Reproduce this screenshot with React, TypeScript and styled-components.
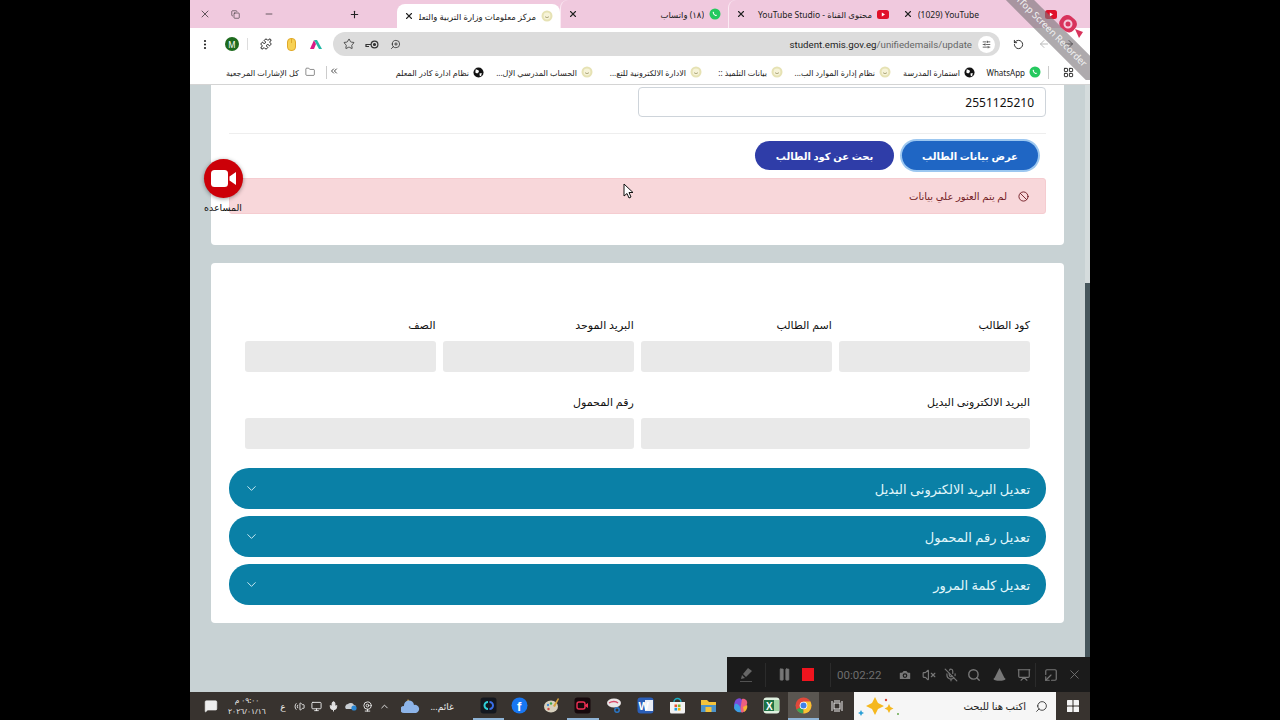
import React from "react";
import styled, { createGlobalStyle } from "styled-components";
import {
  ArrowLeft,
  ArrowRight,
  Ban,
  Camera,
  ChevronDown,
  ChevronUp,
  Copy,
  EllipsisVertical,
  Folder,
  LayoutGrid,
  Minus,
  MicOff,
  Pause,
  Plus,
  Puzzle,
  RotateCw,
  Search,
  SlidersHorizontal,
  Star,
  VolumeX,
  X,
  ChevronsLeft,
  ZoomIn,
  Volume2,
  Monitor,
  Mic,
  Presentation,
  SquareArrowOutDownLeft,
  MessageSquare,
  Webcam,
} from "lucide-react";

const GlobalStyle = createGlobalStyle`
  html, body { margin: 0; padding: 0; background: #000; overflow: hidden; }
  * { box-sizing: border-box; }
  body { font-family: "Noto Sans", "DejaVu Sans", sans-serif; }
`;

const Stage = styled.div`
  width: 1280px;
  height: 720px;
  background: #000;
  display: flex;
  justify-content: center;
`;

const Screen = styled.div`
  position: relative;
  width: 900px;
  height: 720px;
  display: flex;
  flex-direction: column;
  overflow: hidden;
`;

/* browser chrome */
const TabStrip = styled.div`
  height: 28px;
  background: #f0c9de;
  display: flex;
  align-items: center;
  direction: rtl;
  padding-right: 26px;
  color: #222;
  flex: none;
`;

const Tab = styled.div<{ $active?: boolean; $w: number; $sep?: boolean }>`
  position: relative;
  width: ${(p) => p.$w}px;
  height: ${(p) => (p.$active ? 24 : 28)}px;
  margin-top: ${(p) => (p.$active ? 4 : 0)}px;
  flex: none;
  display: flex;
  align-items: center;
  gap: 5px;
  padding: 0 7px 0 7px;
  background: ${(p) => (p.$active ? "#fff" : "transparent")};
  border-radius: 8px 8px 0 0;
  border-left: ${(p) => (p.$sep ? "1px solid #fbeaf3" : "none")};
`;

const TabTitle = styled.span<{ $ltr?: boolean }>`
  flex: 1;
  font-size: 8.5px;
  white-space: nowrap;
  overflow: hidden;
  text-align: ${(p) => (p.$ltr ? "left" : "right")};
  direction: ${(p) => (p.$ltr ? "ltr" : "rtl")};
`;

const WindowControls = styled.div`
  display: flex;
  align-items: center;
  direction: ltr;
  flex: 1;
  padding-left: 9px;
  gap: 0;
`;

const WinButton = styled.span<{ $w: number }>`
  width: ${(p) => p.$w}px;
  display: flex;
  justify-content: flex-start;
`;

const NewTab = styled.span`
  margin-left: 65px;
  display: flex;
`;

const Toolbar = styled.div`
  height: 32px;
  background: #fff;
  display: flex;
  align-items: center;
  padding: 0 9px 0 9px;
  color: #222;
  flex: none;
`;

const ToolIcon = styled.span<{ $w?: number; $faded?: boolean }>`
  width: ${(p) => p.$w ?? 26}px;
  display: flex;
  justify-content: center;
  align-items: center;
  flex: none;
  opacity: ${(p) => (p.$faded ? 0.3 : 1)};
`;

const Avatar = styled.span`
  width: 14px;
  height: 14px;
  border-radius: 50%;
  background: #1e6b1e;
  color: #fff;
  font-size: 8px;
  display: flex;
  justify-content: center;
  align-items: center;
`;

const ToolSep = styled.span`
  width: 1px;
  height: 12px;
  background: #ddd;
  margin: 0 6px 0 6px;
  flex: none;
`;

const Omnibox = styled.div`
  width: 667px;
  height: 24px;
  margin: 0 6px 0 5px;
  background: #dcdcdc;
  border-radius: 12px;
  display: flex;
  align-items: center;
  padding: 0 5px 0 5px;
  flex: none;
`;

const UrlText = styled.span`
  flex: 1;
  text-align: right;
  font-size: 9.7px;
  color: #1c1c1c;
  padding-right: 6px;
  font-family: "Roboto", sans-serif;
  span {
    color: #666;
  }
`;

const TuneButton = styled.span`
  width: 17px;
  height: 17px;
  border-radius: 50%;
  background: #fff;
  display: flex;
  justify-content: center;
  align-items: center;
`;

const BookmarkBar = styled.div`
  height: 25px;
  background: #fff;
  border-bottom: 1px solid #d4d4d4;
  display: flex;
  align-items: center;
  direction: rtl;
  padding: 0 0 0 10px;
  flex: none;
  color: #222;
`;

const Bookmark = styled.span<{ $w: number }>`
  width: ${(p) => p.$w}px;
  flex: none;
  display: flex;
  align-items: center;
  gap: 4px;
  font-size: 8px;
  white-space: nowrap;
  overflow: hidden;
`;

const BarSep = styled.span<{ $m?: number }>`
  width: 1px;
  height: 13px;
  background: #ccc;
  margin: 0 ${(p) => p.$m ?? 8}px;
  flex: none;
`;

/* page */
const Page = styled.div`
  flex: 1;
  min-height: 0;
  background: #c8d2d4;
  display: flex;
  overflow: hidden;
`;

const PageColumn = styled.div`
  flex: 1;
  padding: 0 21px;
  display: flex;
  flex-direction: column;
  gap: 18px;
`;

const Scrollbar = styled.div`
  width: 5px;
  background: #d5dcdd;
  padding-top: 198px;
  flex: none;
  div {
    height: 100%;
    background: #46565c;
  }
`;

const Card = styled.section<{ $top: number; $bottom: number }>`
  background: #fff;
  border-radius: 4px;
  padding: ${(p) => p.$top}px 18px ${(p) => p.$bottom}px;
  direction: rtl;
`;

const CodeInput = styled.div`
  width: 408px;
  height: 30px;
  border: 1px solid #ced4da;
  border-radius: 4px;
  font-size: 12px;
  color: #111;
  display: flex;
  align-items: center;
  padding: 0 11px;
`;

const Divider = styled.div`
  height: 1px;
  background: #eeeeee;
  margin: 16px 0 7px;
`;

const ButtonRow = styled.div`
  display: flex;
  gap: 8px;
  padding-right: 8px;
`;

const ActionButton = styled.div<{ $bg: string; $w: number; $focus?: boolean }>`
  width: ${(p) => p.$w}px;
  height: 29px;
  border-radius: 15px;
  background: ${(p) => p.$bg};
  box-shadow: ${(p) => (p.$focus ? "0 0 0 2px #9cc7f0" : "none")};
  color: #fff;
  font-size: 10px;
  font-weight: 700;
  display: flex;
  justify-content: center;
  align-items: center;
`;

const Alert = styled.div`
  height: 36px;
  margin-top: 8px;
  background: #f8d7da;
  border: 1px solid #f5ccd0;
  border-radius: 3px;
  color: #721c24;
  font-size: 10px;
  display: flex;
  align-items: center;
  gap: 11px;
  padding-right: 16px;
`;

const FieldGrid = styled.div`
  display: grid;
  grid-template-columns: repeat(4, 1fr);
  column-gap: 7.6px;
  row-gap: 23px;
  padding: 0 16px;
`;

const Field = styled.div<{ $span?: number }>`
  grid-column: span ${(p) => p.$span ?? 1};
`;

const FieldLabel = styled.div`
  height: 14px;
  line-height: 14px;
  font-size: 11px;
  color: #111;
  margin-bottom: 9px;
  white-space: nowrap;
`;

const ReadonlyBox = styled.div`
  height: 31px;
  background: #e9e9e9;
  border-radius: 3px;
`;

const AccordionList = styled.div`
  display: flex;
  flex-direction: column;
  gap: 7px;
  margin-top: 19px;
`;

const AccordionBar = styled.div`
  height: 41px;
  border-radius: 20px;
  background: #0a80a6;
  color: #e2f7fb;
  font-size: 13px;
  display: flex;
  align-items: center;
  justify-content: space-between;
  padding: 0 16px 0 15px;
`;

/* things lying over the page */
const HelpWidget = styled.div`
  position: absolute;
  left: 8px;
  top: 159px;
  width: 50px;
  display: flex;
  flex-direction: column;
  align-items: center;
`;

const HelpCircle = styled.div`
  width: 39px;
  height: 39px;
  border-radius: 50%;
  background: #cc0008;
  box-shadow: 0 1px 4px rgba(0, 0, 0, 0.4);
  display: flex;
  justify-content: center;
  align-items: center;
`;

const HelpLabel = styled.span`
  font-size: 9.5px;
  color: #111;
  margin-top: 3px;
  white-space: nowrap;
`;

const Cursor = styled.svg`
  position: absolute;
  left: 433px;
  top: 183px;
`;

const WatermarkCorner = styled.div`
  position: absolute;
  right: 0;
  top: 0;
  width: 90px;
  height: 80px;
  overflow: hidden;
  pointer-events: none;
`;

const WatermarkBand = styled.div`
  position: absolute;
  left: -12px;
  top: 22px;
  width: 128px;
  height: 20px;
  line-height: 20px;
  transform: rotate(45deg);
  background: rgba(125, 118, 122, 0.62);
  color: #f2f2f2;
  font-size: 9.5px;
  text-align: center;
  white-space: nowrap;
`;

const WatermarkLogo = styled.svg`
  position: absolute;
  right: 5px;
  top: 12px;
`;

const RecorderPanel = styled.div`
  position: absolute;
  left: 537px;
  top: 657px;
  width: 363px;
  height: 35px;
  background: #1b1b1b;
  display: flex;
  align-items: center;
  color: #777;
`;

const RecSlot = styled.span<{ $w: number }>`
  width: ${(p) => p.$w}px;
  flex: none;
  display: flex;
  justify-content: center;
  align-items: center;
`;

const RecSep = styled.span`
  width: 1px;
  height: 24px;
  background: #2b2b2b;
  flex: none;
`;

const StopSquare = styled.span`
  width: 13px;
  height: 13px;
  background: #f0141e;
`;

const RecTime = styled.span`
  width: 56px;
  margin-left: 6px;
  flex: none;
  font-size: 11.5px;
  color: #6e6e6e;
  font-family: "Roboto", sans-serif;
`;

/* windows taskbar */
const Taskbar = styled.div`
  height: 28px;
  background: #38332f;
  display: flex;
  align-items: center;
  color: #eee;
  flex: none;
`;

const TrayArea = styled.div`
  flex: 1;
  display: flex;
  align-items: center;
  padding-left: 12px;
`;

const TraySlot = styled.span<{ $w: number }>`
  width: ${(p) => p.$w}px;
  flex: none;
  display: flex;
  justify-content: center;
  align-items: center;
`;

const Clock = styled.span`
  width: 44px;
  margin: 0 6px 0 5px;
  flex: none;
  direction: rtl;
  text-align: center;
  font-size: 7.5px;
  line-height: 11px;
`;

const WeatherText = styled.span`
  font-size: 9px;
  width: 30px;
  flex: none;
  direction: rtl;
  text-align: center;
`;

const PinnedApps = styled.div`
  display: flex;
  flex: none;
`;

const PinnedApp = styled.span<{ $open?: boolean; $active?: boolean }>`
  width: 31.5px;
  height: 28px;
  flex: none;
  display: flex;
  justify-content: center;
  align-items: center;
  background: ${(p) => (p.$active ? "#5a5651" : "transparent")};
  border-bottom: 2px solid ${(p) => (p.$open ? "#8fb4d6" : "transparent")};
`;

const TaskSearch = styled.div`
  width: 202px;
  height: 28px;
  background: #f6f6f6;
  color: #222;
  font-size: 10px;
  display: flex;
  align-items: center;
  direction: rtl;
  padding: 0 8px 0 0;
  gap: 8px;
  flex: none;
`;

const SearchSparkles = styled.svg`
  margin-right: auto;
  margin-left: 3px;
`;

const AppLetter = styled.text`
  font-family: "Liberation Sans", sans-serif;
  font-weight: 700;
`;

const EduIcon = () => (
  <svg width="12" height="12" viewBox="0 0 12 12" style={{ flex: "none" }}>
    <circle cx="6" cy="6" r="5.5" fill="#e6e2b4" />
    <circle cx="6" cy="6" r="3.4" fill="#f6f3d8" />
    <path d="M4 6.5c1 1.4 3 1.4 4 0" stroke="#9b9465" fill="none" strokeWidth=".8" />
  </svg>
);

const GlobeIcon = () => (
  <svg width="11" height="11" viewBox="0 0 12 12" style={{ flex: "none" }}>
    <circle cx="6" cy="6" r="5.5" fill="#111" />
    <path d="M3 2.5l3 1 .5 2-2 1.5-2-1zM7 7l2.5-.5L9 9.5 7.5 10z" fill="#fff" />
  </svg>
);

const WhatsAppIcon = () => (
  <svg width="12" height="12" viewBox="0 0 12 12" style={{ flex: "none" }}>
    <circle cx="6" cy="6" r="5.5" fill="#25c95f" />
    <path d="M4 3.6c-.8 1 .2 2.6 1 3.3s2.2 1.5 3 .7l-.9-1.1-.8.4-1.5-1.6.4-.8z" fill="#fff" />
  </svg>
);

const YouTubeIcon = () => (
  <svg width="12" height="9" viewBox="0 0 12 9" style={{ flex: "none" }}>
    <rect width="12" height="9" rx="2.5" fill="#e0102a" />
    <path d="M4.8 2.6v3.8L8 4.5z" fill="#fff" />
  </svg>
);

const Tile = ({ bg, children }: { bg: string; children?: React.ReactNode }) => (
  <svg width="17" height="17" viewBox="0 0 17 17">
    <rect x="0.5" y="0.5" width="16" height="16" rx="3" fill={bg} />
    {children}
  </svg>
);

const FIELDS_ROW = ["كود الطالب", "اسم الطالب", "البريد الموحد", "الصف"];
const ACCORDIONS = [
  "تعديل البريد الالكترونى البديل",
  "تعديل رقم المحمول",
  "تعديل كلمة المرور",
];

function App() {
  return (
    <Stage>
      <GlobalStyle />
      <Screen>
        <TabStrip>
          <Tab $w={168}>
            <span style={{ width: 66, flex: "none", display: "flex" }}>
              <YouTubeIcon />
            </span>
            <TabTitle $ltr>(1029) YouTube</TabTitle>
            <X size={10} strokeWidth={2.6} />
          </Tab>
          <Tab $w={168} $sep>
            <YouTubeIcon />
            <TabTitle>محتوى القناة - YouTube Studio</TabTitle>
            <X size={10} strokeWidth={2.6} />
          </Tab>
          <Tab $w={168} $sep>
            <WhatsAppIcon />
            <TabTitle>(١٨) واتساب</TabTitle>
            <X size={10} strokeWidth={2.6} />
          </Tab>
          <Tab $w={163} $active>
            <EduIcon />
            <TabTitle>مركز معلومات وزارة التربية والتعليم</TabTitle>
            <X size={10} strokeWidth={2.6} />
          </Tab>
          <WindowControls style={{ direction: "ltr" }}>
            <WinButton $w={32}>
              <X size={12} strokeWidth={1.4} />
            </WinButton>
            <WinButton $w={33}>
              <Copy size={9} strokeWidth={1.5} />
            </WinButton>
            <WinButton $w={20}>
              <Minus size={10} strokeWidth={1.6} />
            </WinButton>
            <NewTab>
              <Plus size={11} strokeWidth={2.4} />
            </NewTab>
          </WindowControls>
        </TabStrip>

        <Toolbar>
          <ToolIcon $w={12}>
            <EllipsisVertical size={13} strokeWidth={2.4} />
          </ToolIcon>
          <ToolIcon $w={34} style={{ paddingLeft: 8 }}>
            <Avatar>M</Avatar>
          </ToolIcon>
          <ToolSep style={{ margin: "0 5px 0 2px" }} />
          <ToolIcon $w={25}>
            <Puzzle size={12} strokeWidth={2} />
          </ToolIcon>
          <ToolIcon $w={26}>
            <svg width="9" height="13" viewBox="0 0 9 13">
              <rect x="0.5" y="0.5" width="8" height="12" rx="3.5" fill="#f7d154" stroke="#e0a92a" />
              <path d="M4.5 1v4" stroke="#e0a92a" />
            </svg>
          </ToolIcon>
          <ToolIcon $w={24}>
            <svg width="13" height="12" viewBox="0 0 13 12">
              <path d="M0 11L4 2l2 4-2 5z" fill="#d81b85" />
              <path d="M4 2h3l5 9H9z" fill="#21b8a5" />
            </svg>
          </ToolIcon>
          <Omnibox>
            <ToolIcon $w={22}>
              <Star size={12} strokeWidth={1.5} />
            </ToolIcon>
            <ToolIcon $w={24}>
              <svg width="14" height="9" viewBox="0 0 14 9" fill="none" stroke="#333" strokeWidth="1.2">
                <circle cx="9.5" cy="4.5" r="3.4" />
                <circle cx="9.5" cy="4.5" r="1" fill="#333" />
                <path d="M6 4.5H1v2h3" />
              </svg>
            </ToolIcon>
            <ToolIcon $w={22}>
              <ZoomIn size={11} strokeWidth={1.6} style={{ transform: "scaleX(-1)" }} />
            </ToolIcon>
            <UrlText>
              student.emis.gov.eg<span>/unifiedemails/update</span>
            </UrlText>
            <TuneButton>
              <SlidersHorizontal size={9} strokeWidth={1.8} />
            </TuneButton>
          </Omnibox>
          <ToolIcon $w={25}>
            <RotateCw size={11} strokeWidth={2} style={{ transform: "scaleX(-1)" }} />
          </ToolIcon>
          <ToolIcon $w={25} $faded>
            <ArrowLeft size={12} />
          </ToolIcon>
          <ToolIcon $w={25}>
            <ArrowRight size={12} />
          </ToolIcon>
        </Toolbar>

        <BookmarkBar>
          <Bookmark $w={34} style={{ justifyContent: "center", paddingRight: 9 }}>
            <LayoutGrid size={11} strokeWidth={2} />
          </Bookmark>
          <BarSep $m={7} />
          <Bookmark $w={61}>
            <WhatsAppIcon />
            WhatsApp
          </Bookmark>
          <Bookmark $w={84} style={{ marginRight: 5 }}>
            <GlobeIcon />
            استمارة المدرسة
          </Bookmark>
          <Bookmark $w={108}>
            <EduIcon />
            نظام إدارة الموارد الب...
          </Bookmark>
          <Bookmark $w={81}>
            <EduIcon />
            بيانات التلميذ ::
          </Bookmark>
          <Bookmark $w={109}>
            <EduIcon />
            الادارة الالكترونية للتع...
          </Bookmark>
          <Bookmark $w={109}>
            <EduIcon />
            الحساب المدرسي الإل...
          </Bookmark>
          <Bookmark $w={95}>
            <GlobeIcon />
            نظام ادارة كادر المعلم
          </Bookmark>
          <Bookmark $w={62} style={{ justifyContent: "flex-start" }}>
            <span style={{ marginRight: 50 }}>
              <ChevronsLeft size={10} />
            </span>
          </Bookmark>
          <BarSep $m={0} />
          <Bookmark $w={100} style={{ paddingRight: 11 }}>
            <Folder size={12} strokeWidth={1.2} style={{ marginLeft: 2 }} />
            كل الإشارات المرجعية
          </Bookmark>
        </BookmarkBar>

        <Page>
          <PageColumn>
            <Card $top={2} $bottom={31} style={{ borderRadius: "0 0 4px 4px" }}>
              <CodeInput>2551125210</CodeInput>
              <Divider />
              <ButtonRow>
                <ActionButton $bg="#1f66c4" $w={136} $focus>
                  عرض بيانات الطالب
                </ActionButton>
                <ActionButton $bg="#2f3da8" $w={139}>
                  بحث عن كود الطالب
                </ActionButton>
              </ButtonRow>
              <Alert>
                <Ban size={11} />
                لم يتم العثور علي بيانات
              </Alert>
            </Card>

            <Card $top={55} $bottom={18}>
              <FieldGrid>
                {FIELDS_ROW.map((label) => (
                  <Field key={label}>
                    <FieldLabel>{label}</FieldLabel>
                    <ReadonlyBox />
                  </Field>
                ))}
                <Field $span={2}>
                  <FieldLabel>البريد الالكترونى البديل</FieldLabel>
                  <ReadonlyBox />
                </Field>
                <Field $span={2}>
                  <FieldLabel>رقم المحمول</FieldLabel>
                  <ReadonlyBox />
                </Field>
              </FieldGrid>
              <AccordionList>
                {ACCORDIONS.map((title) => (
                  <AccordionBar key={title}>
                    {title}
                    <ChevronDown size={15} strokeWidth={1.4} />
                  </AccordionBar>
                ))}
              </AccordionList>
            </Card>
          </PageColumn>
          <Scrollbar>
            <div />
          </Scrollbar>
        </Page>

        <Taskbar>
          <TrayArea>
            <TraySlot $w={18}>
              <MessageSquare size={14} fill="#eee" strokeWidth={1} />
            </TraySlot>
            <Clock>
              ٠٩:٠٠ م
              <br />
              ٢٠٢٦/٠١/١٦
            </Clock>
            <TraySlot $w={16} style={{ fontSize: 9 }}>
              ع
            </TraySlot>
            <TraySlot $w={17}>
              <Volume2 size={11} style={{ transform: "scaleX(-1)" }} />
            </TraySlot>
            <TraySlot $w={17}>
              <Monitor size={11} />
            </TraySlot>
            <TraySlot $w={17}>
              <Mic size={11} fill="#ddd" />
            </TraySlot>
            <TraySlot $w={17}>
              <svg width="12" height="10" viewBox="0 0 12 10">
                <path d="M1 8a3 3 0 0 1 2-5 4 4 0 0 1 6 1 2 2 0 0 1 0 4z" fill="#c9ced3" />
                <circle cx="9" cy="7" r="2.6" fill="#2b87d3" />
              </svg>
            </TraySlot>
            <TraySlot $w={17}>
              <Webcam size={11} />
            </TraySlot>
            <TraySlot $w={17}>
              <ChevronUp size={11} />
            </TraySlot>
            <TraySlot $w={34}>
              <svg width="19" height="17" viewBox="0 0 19 17">
                <path d="M7 1l2 4-4 1z" fill="#f5b335" />
                <path d="M3 15a3.5 3.5 0 0 1 0-7 5 5 0 0 1 10-1 4 4 0 0 1 2 8z" fill="#8db4e8" />
              </svg>
            </TraySlot>
            <WeatherText>غائم...</WeatherText>
          </TrayArea>
          <PinnedApps>
            <PinnedApp $open>
              <Tile bg="#14181f">
                <path d="M8 5a3.5 3.5 0 1 0 0 7" fill="none" stroke="#2fd0d8" strokeWidth="2" />
                <path d="M9.5 5a3.5 3.5 0 1 1 0 7" fill="none" stroke="#3a6ee8" strokeWidth="2" />
              </Tile>
            </PinnedApp>
            <PinnedApp>
              <svg width="17" height="17" viewBox="0 0 17 17">
                <circle cx="8.5" cy="8.5" r="8" fill="#1877f2" />
                <AppLetter x="6" y="14" fontSize="13" fill="#fff">
                  f
                </AppLetter>
              </svg>
            </PinnedApp>
            <PinnedApp>
              <svg width="17" height="17" viewBox="0 0 17 17">
                <ellipse cx="8" cy="9.5" rx="7" ry="6" fill="#d7d0bd" />
                <circle cx="5" cy="8" r="1.2" fill="#3b8ad8" />
                <circle cx="8" cy="6.5" r="1.2" fill="#41a64a" />
                <circle cx="5.5" cy="12" r="1.2" fill="#d8453b" />
                <path d="M10 9l5-8 1 1-4 8z" fill="#d7a33a" />
              </svg>
            </PinnedApp>
            <PinnedApp $open>
              <Tile bg="#16090c">
                <rect x="3" y="5" width="8" height="7" rx="2" fill="none" stroke="#ef3054" strokeWidth="1.4" />
                <path d="M11 8l3-2v5l-3-2z" fill="#ef3054" />
              </Tile>
            </PinnedApp>
            <PinnedApp>
              <svg width="17" height="17" viewBox="0 0 17 17">
                <ellipse cx="8" cy="6" rx="7" ry="4.5" fill="#e9e6e6" />
                <path d="M3 6c3-2 7-2 9 0" stroke="#d84a6b" fill="none" strokeWidth="1.4" />
                <circle cx="11" cy="13" r="2.2" fill="none" stroke="#2a78c9" strokeWidth="1.4" />
              </svg>
            </PinnedApp>
            <PinnedApp>
              <Tile bg="#2b5fb8">
                <rect x="8" y="3" width="8" height="11" fill="#e9eef8" />
                <AppLetter x="1.5" y="13" fontSize="11" fill="#fff">
                  W
                </AppLetter>
              </Tile>
            </PinnedApp>
            <PinnedApp>
              <svg width="17" height="17" viewBox="0 0 17 17">
                <path d="M1 5h15v10a1.5 1.5 0 0 1-1.5 1.5h-12A1.5 1.5 0 0 1 1 15z" fill="#f2f2f2" />
                <path d="M5 5a3.5 3.5 0 0 1 7 0" fill="none" stroke="#18b0c4" strokeWidth="1.3" />
                <rect x="5.5" y="7.5" width="2.6" height="2.6" fill="#e8532e" />
                <rect x="8.9" y="7.5" width="2.6" height="2.6" fill="#79b82c" />
                <rect x="5.5" y="10.9" width="2.6" height="2.6" fill="#1c9ce0" />
                <rect x="8.9" y="10.9" width="2.6" height="2.6" fill="#f4b400" />
              </svg>
            </PinnedApp>
            <PinnedApp>
              <svg width="17" height="15" viewBox="0 0 17 15">
                <path d="M1 2h6l2 2h7v10H1z" fill="#f3c33b" />
                <rect x="1" y="7" width="15" height="7" fill="#4b93c9" />
                <rect x="5.5" y="9" width="6" height="5" fill="#f3c33b" />
              </svg>
            </PinnedApp>
            <PinnedApp>
              <svg width="17" height="17" viewBox="0 0 17 17">
                <path d="M5 2c3-2 5 0 6 3l2 6c1 3-2 5-5 4-3 0-6-3-6-6s1-6 3-7z" fill="#7b4bd8" />
                <path d="M10 2c3-1 6 2 5 5l-2 6c-1 3-4 3-5 1z" fill="#ec5f7f" />
                <path d="M3 7c2-1 4 1 5 3l1 5c-3 1-6-1-7-4z" fill="#3d9fe6" />
                <path d="M11 10l4-2c1 3-1 6-3 7z" fill="#f5b335" />
              </svg>
            </PinnedApp>
            <PinnedApp>
              <Tile bg="#dff0df">
                <rect x="9" y="3" width="7" height="11" fill="#9fd3a3" />
                <rect x="1" y="3" width="10" height="11" fill="#1d7044" />
                <AppLetter x="3" y="12.5" fontSize="10" fill="#fff">
                  X
                </AppLetter>
              </Tile>
            </PinnedApp>
            <PinnedApp $open $active>
              <svg width="17" height="17" viewBox="0 0 17 17">
                <circle cx="8.5" cy="8.5" r="8" fill="#e0483a" />
                <path d="M8.5 8.5L1.6 12.5A8 8 0 0 0 8.5 16.5z" fill="#3aa655" />
                <path d="M8.5 8.5v8A8 8 0 0 0 15.4 4.5H8.5z" fill="#f7c433" />
                <circle cx="8.5" cy="8.5" r="3.8" fill="#fff" />
                <circle cx="8.5" cy="8.5" r="3" fill="#3f81e8" />
              </svg>
            </PinnedApp>
          </PinnedApps>
          <TraySlot $w={35}>
            <svg width="12" height="12" viewBox="0 0 12 12" fill="none" stroke="#eee" strokeWidth="1">
              <rect x="3" y="3" width="6" height="6" />
              <path d="M1 1v10M11 1v10M3 1h6M3 11h6" />
            </svg>
          </TraySlot>
          <TaskSearch>
            <Search size={13} strokeWidth={1.5} style={{ transform: "scaleX(-1)", marginLeft: 1 }} />
            اكتب هنا للبحث
            <SearchSparkles width="44" height="22" viewBox="0 0 44 22">
              <path d="M18 2l3 6 6 3-6 3-3 6-3-6-6-3 6-3z" fill="#f5b81f" />
              <path d="M32 9l1.5 3 3 1.5-3 1.5-1.5 3-1.5-3-3-1.5 3-1.5z" fill="#f5b81f" />
              <path d="M4 15l1 2 2 1-2 1-1 2-1-2-2-1 2-1z" fill="#2a9fd6" />
              <circle cx="29" cy="5" r="1.2" fill="#d9483b" />
              <circle cx="41" cy="19" r="1" fill="#69a84f" />
            </SearchSparkles>
          </TaskSearch>
          <TraySlot $w={34}>
            <svg width="12" height="12" viewBox="0 0 12 12" fill="#f4f4f4">
              <rect width="5.5" height="5.5" rx="0.6" />
              <rect x="6.5" width="5.5" height="5.5" rx="0.6" />
              <rect y="6.5" width="5.5" height="5.5" rx="0.6" />
              <rect x="6.5" y="6.5" width="5.5" height="5.5" rx="0.6" />
            </svg>
          </TraySlot>
        </Taskbar>

        <HelpWidget>
          <HelpCircle>
            <svg width="25" height="17" viewBox="0 0 25 17" fill="#fff">
              <rect width="17" height="17" rx="3.5" />
              <path d="M18.5 6.5L25 2v13l-6.500-4.500z" />
            </svg>
          </HelpCircle>
          <HelpLabel>المساعده</HelpLabel>
        </HelpWidget>

        <Cursor width="11" height="16" viewBox="0 0 11 16">
          <path d="M1 1v12l3-2.500 2 4.500 2-1-2-4.500h4z" fill="#fff" stroke="#111" strokeWidth="1" />
        </Cursor>

        <WatermarkCorner>
          <WatermarkBand>iTop Screen Recorder</WatermarkBand>
          <WatermarkLogo width="28" height="28" viewBox="0 0 28 28">
            <rect x="3" y="4" width="17" height="15" rx="6" fill="#d8335c" transform="rotate(40 11 11)" />
            <circle cx="11" cy="12" r="3.5" fill="none" stroke="#f5c9dc" strokeWidth="2" />
            <path d="M18 17l8 3-4 6z" fill="#d8335c" />
          </WatermarkLogo>
        </WatermarkCorner>

        <RecorderPanel>
          <RecSlot $w={38}>
            <svg width="15" height="15" viewBox="0 0 15 15" fill="#666">
              <path d="M9 1l4 3-6 6-3-3z" />
              <path d="M3 8l3 3-4 1zM1 14h12v.800H1z" />
            </svg>
          </RecSlot>
          <RecSep />
          <RecSlot $w={36} style={{ marginLeft: 0 }}>
            <Pause size={15} fill="#777" strokeWidth={1} />
          </RecSlot>
          <RecSlot $w={12}>
            <StopSquare />
          </RecSlot>
          <RecSlot $w={16} />
          <RecSep />
          <RecTime>00:02:22</RecTime>
          <RecSlot $w={24}>
            <Camera size={14} fill="#777" stroke="#1b1b1b" />
          </RecSlot>
          <RecSlot $w={23}>
            <VolumeX size={14} />
          </RecSlot>
          <RecSlot $w={22}>
            <MicOff size={14} />
          </RecSlot>
          <RecSlot $w={24}>
            <Search size={14} strokeWidth={2.4} />
          </RecSlot>
          <RecSlot $w={26}>
            <svg width="13" height="13" viewBox="0 0 13 13" fill="#777">
              <path d="M6.500 0l5 10h-10z" />
              <ellipse cx="6.500" cy="11" rx="6" ry="1.800" />
            </svg>
          </RecSlot>
          <RecSlot $w={23}>
            <Presentation size={14} />
          </RecSlot>
          <RecSep />
          <RecSlot $w={29}>
            <SquareArrowOutDownLeft size={14} />
          </RecSlot>
          <RecSlot $w={19}>
            <X size={15} strokeWidth={1.4} />
          </RecSlot>
        </RecorderPanel>
      </Screen>
    </Stage>
  );
}

export default App;
